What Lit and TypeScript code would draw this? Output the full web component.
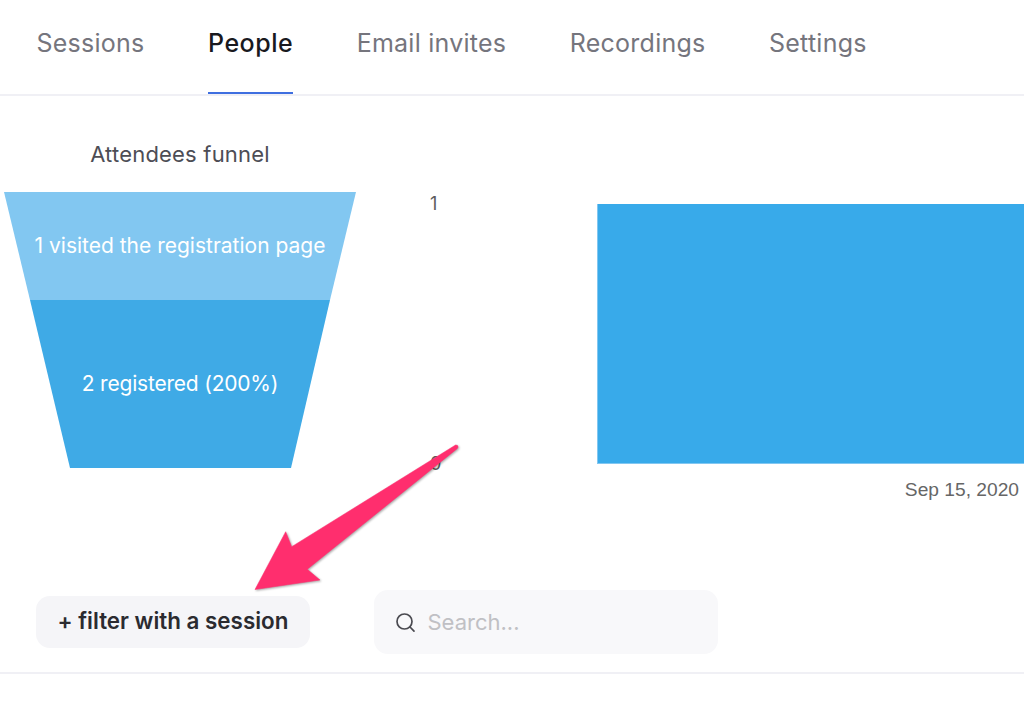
import { LitElement, html, css, svg } from "lit";
import { customElement } from "lit/decorators.js";

const tabs = ["Sessions", "People", "Email invites", "Recordings", "Settings"];

@customElement("app-root")
export class AppRoot extends LitElement {
  static styles = css`
    :host { display: block; position: relative; width: 1024px; height: 702px; overflow: hidden; background: #fff; font-family: Inter, "Noto Sans", sans-serif; }
    .tabs { display: flex; gap: 63.5px; height: 94px; padding-left: 36.5px; border-bottom: 2px solid #f0f0f5; }
    .tab { height: 94px; box-sizing: border-box; line-height: 87px; font-size: 25px; letter-spacing: 0.25px; color: #75757d; white-space: nowrap; }
    .tab.active { color: #19191e; font-weight: 500; letter-spacing: 0.5px; border-bottom: 2px solid #3f6fe0; }
    .content { display: flex; }
    .funnel { width: 360px; flex: none; }
    .title { padding-top: 46px; height: 24px; line-height: 24px; font-size: 22px; letter-spacing: 0.2px; color: #4d4d55; text-align: center; margin-bottom: 26px; }
    .seg { display: flex; align-items: center; justify-content: center; color: #fff; font-size: 21px; }
    .seg span { position: relative; top: -1px; }
    .seg.one { height: 108px; background: #82c7f1; clip-path: polygon(4px 0, 356px 0, 330px 100%, 30px 100%); }
    .seg.two { height: 168px; background: #3faae6; letter-spacing: -0.2px; clip-path: polygon(30px 0, 330px 0, 291px 100%, 70px 100%); }
    .axis { width: 237px; flex: none; box-sizing: border-box; margin-top: 98px; height: 280px; padding-left: 70px; display: flex; flex-direction: column; justify-content: space-between; font-size: 18px; line-height: 20px; color: #5c5c5c; }
    .plot { flex: 1; min-width: 0; margin-top: 108px; }
    .bar { height: 259px; background: #38aaea; border-left: 1px solid #82c7f1; border-bottom: 1px solid #82c7f1; }
    .date { margin-top: 16px; padding-right: 5px; text-align: right; font: 19.2px/20px "Liberation Sans", sans-serif; color: #666; }
    .toolbar { display: flex; align-items: center; margin-top: 90px; padding: 0 0 18px 36px; height: 64px; border-bottom: 2px solid #f0f0f5; }
    .filter { width: 274px; height: 52px; border: 0; padding: 0 0 3px; border-radius: 14px; background: #f5f5f8; color: #2b2b30; font: 600 22.4px Inter, sans-serif; margin-right: 64px; }
    .search { width: 344px; height: 64px; box-sizing: border-box; border-radius: 14px; background: #f8f8fa; display: flex; align-items: center; gap: 11.5px; padding-left: 21px; color: #c0c0c4; font-size: 22px; }
    .search svg { width: 21px; height: 21px; flex: none; }
    .arrow { position: absolute; inset: 0; width: 1024px; height: 702px; pointer-events: none; filter: drop-shadow(1px 1px 1px rgba(0,0,0,.35)); }
  `;

  render() {
    return html`
      <nav class="tabs">
        ${tabs.map((t) => html`<div class="tab ${t === "People" ? "active" : ""}">${t}</div>`)}
      </nav>
      <section class="content">
        <div class="funnel">
          <div class="title">Attendees funnel</div>
          <div class="seg one"><span>1 visited the registration page</span></div>
          <div class="seg two"><span>2 registered (200%)</span></div>
        </div>
        <div class="axis"><span>1</span><span>0</span></div>
        <div class="plot">
          <div class="bar"></div>
          <div class="date">Sep 15, 2020</div>
        </div>
      </section>
      <section class="toolbar">
        <button class="filter">+ filter with a session</button>
        <div class="search">
          <svg viewBox="0 0 21 21" fill="none" stroke="#4a4a50" stroke-width="1.7" stroke-linecap="round">
            <circle cx="9.5" cy="9.5" r="7.5"></circle>
            <path d="M15 15l4 4.2"></path>
          </svg>
          <span>Search...</span>
        </div>
      </section>
      <svg class="arrow" viewBox="0 0 1024 702">
        ${svg`<path fill="#ff2e6e" stroke="#ff2e6e" stroke-width="0.5" stroke-linejoin="round"
          d="M455.6 445 Q458.2 444.8 458 447 Q457.9 448.3 456.5 449.2 L307.3 569.3 L320 580 L255 589.5 L285.7 531.7 L291.7 546.7 Z"></path>`}
      </svg>
    `;
  }
}
